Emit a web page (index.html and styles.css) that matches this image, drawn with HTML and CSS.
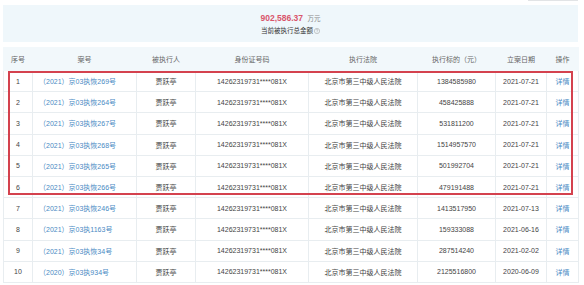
FILE: index.html
```html
<!DOCTYPE html>
<html lang="zh">
<head>
<meta charset="utf-8">
<title>被执行人</title>
<link rel="stylesheet" href="styles.css">
</head>
<body>
<div class="page">
  <div class="topbar"><span class="tab-edge"></span></div>
  <div class="summary">
    <div class="amount"><span class="num">902,586.37</span> <span class="unit">万元</span></div>
    <div class="label">当前被执行总金额<svg class="help" viewBox="0 0 12 12" width="6" height="6"><circle cx="6" cy="6" r="5.3" fill="none" stroke="#9a9a9a" stroke-width="1"/><path d="M4.3 4.6a1.7 1.7 0 1 1 2.4 1.5c-.5.3-.7.6-.7 1.1v.4" fill="none" stroke="#9a9a9a" stroke-width="1"/><circle cx="6" cy="9" r=".6" fill="#9a9a9a"/></svg></div>
  </div>
  <div class="table-wrap">
    <table class="grid">
      <colgroup>
        <col class="c1"><col class="c2"><col class="c3"><col class="c4"><col class="c5"><col class="c6"><col class="c7"><col class="c8">
      </colgroup>
      <thead>
        <tr><th>序号</th><th>案号</th><th>被执行人</th><th>身份证号码</th><th>执行法院</th><th>执行标的（元）</th><th>立案日期</th><th>操作</th></tr>
      </thead>
      <tbody>
        <tr><td>1</td><td class="case"><a>（2021）京03执恢269号</a></td><td>贾跃亭</td><td>14262319731****081X</td><td>北京市第三中级人民法院</td><td>1384585980</td><td>2021-07-21</td><td><a>详情</a></td></tr>
        <tr><td>2</td><td class="case"><a>（2021）京03执恢264号</a></td><td>贾跃亭</td><td>14262319731****081X</td><td>北京市第三中级人民法院</td><td>458425888</td><td>2021-07-21</td><td><a>详情</a></td></tr>
        <tr><td>3</td><td class="case"><a>（2021）京03执恢267号</a></td><td>贾跃亭</td><td>14262319731****081X</td><td>北京市第三中级人民法院</td><td>531811200</td><td>2021-07-21</td><td><a>详情</a></td></tr>
        <tr><td>4</td><td class="case"><a>（2021）京03执恢268号</a></td><td>贾跃亭</td><td>14262319731****081X</td><td>北京市第三中级人民法院</td><td>1514957570</td><td>2021-07-21</td><td><a>详情</a></td></tr>
        <tr><td>5</td><td class="case"><a>（2021）京03执恢265号</a></td><td>贾跃亭</td><td>14262319731****081X</td><td>北京市第三中级人民法院</td><td>501992704</td><td>2021-07-21</td><td><a>详情</a></td></tr>
        <tr><td>6</td><td class="case"><a>（2021）京03执恢266号</a></td><td>贾跃亭</td><td>14262319731****081X</td><td>北京市第三中级人民法院</td><td>479191488</td><td>2021-07-21</td><td><a>详情</a></td></tr>
        <tr><td>7</td><td class="case"><a>（2021）京03执恢246号</a></td><td>贾跃亭</td><td>14262319731****081X</td><td>北京市第三中级人民法院</td><td>1413517950</td><td>2021-07-13</td><td><a>详情</a></td></tr>
        <tr><td>8</td><td class="case"><a>（2021）京03执1163号</a></td><td>贾跃亭</td><td>14262319731****081X</td><td>北京市第三中级人民法院</td><td>159333088</td><td>2021-06-16</td><td><a>详情</a></td></tr>
        <tr><td>9</td><td class="case"><a>（2021）京03执恢34号</a></td><td>贾跃亭</td><td>14262319731****081X</td><td>北京市第三中级人民法院</td><td>287514240</td><td>2021-02-02</td><td><a>详情</a></td></tr>
        <tr><td>10</td><td class="case"><a>（2020）京03执934号</a></td><td>贾跃亭</td><td>14262319731****081X</td><td>北京市第三中级人民法院</td><td>2125516800</td><td>2020-06-09</td><td><a>详情</a></td></tr>
      </tbody>
    </table>
    <div class="highlight"></div>
  </div>
</div>
</body>
</html>
```
FILE: styles.css
```css
html, body {
  margin: 0;
  padding: 0;
  background: #ffffff;
}
body {
  font-family: "Liberation Sans", "Noto Sans CJK SC", sans-serif;
  color: #333;
}
.page {
  width: 575px;
  margin-left: 3px;
}
.topbar {
  height: 1px;
  display: flex;
  justify-content: flex-end;
}
.tab-edge {
  width: 50px;
  height: 1px;
  background: #e2e4e6;
}
.summary {
  margin-top: 4px;
  height: 37px;
  background: #eff7fb;
  text-align: center;
  padding-top: 5px;
  box-sizing: border-box;
}
.amount {
  line-height: 12px;
  height: 12px;
}
.num {
  font-size: 8.5px;
  font-weight: bold;
  color: #d9556b;
}
.unit {
  font-size: 6.5px;
  color: #888;
}
.label {
  margin-top: 4px;
  font-size: 6.5px;
  line-height: 10px;
  color: #333;
}
.help {
  display: inline-block;
  margin-left: 1px;
  vertical-align: -0.5px;
}
.table-wrap {
  position: relative;
  margin-top: 5px;
}
.grid {
  width: 575px;
  table-layout: fixed;
  border-collapse: collapse;
  font-size: 7px;
}
.c1 { width: 29px; }
.c2 { width: 104px; }
.c3 { width: 59px; }
.c4 { width: 113px; }
.c5 { width: 109px; }
.c6 { width: 78px; }
.c7 { width: 51px; }
.c8 { width: 32px; }
.grid th {
  height: 22px;
  background: #f2f8fb;
  color: #666;
  font-weight: normal;
  text-align: center;
  padding: 0;
  border: 1px solid #f2f8fb;
}
.grid td {
  height: 20.2px;
  padding: 0;
  text-align: center;
  color: #444;
  border: 1px solid #e8edf0;
  white-space: nowrap;
  overflow: hidden;
}
.grid td.case {
  text-align: left;
  padding-left: 6px;
}
.grid a {
  color: #4a8ac4;
}
.highlight {
  position: absolute;
  left: 5px;
  top: 24px;
  width: 561px;
  height: 120px;
  border: 2px solid #d4424e;
  pointer-events: none;
}
```
